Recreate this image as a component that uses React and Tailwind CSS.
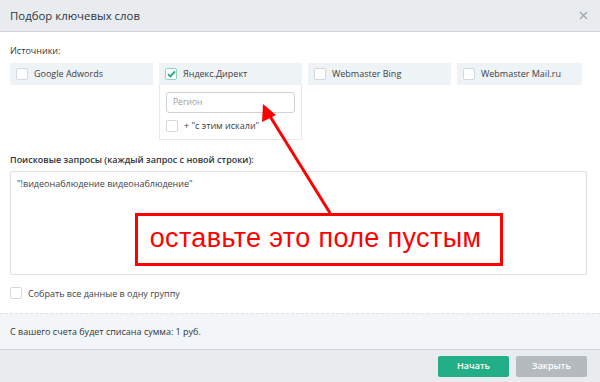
import React from "react";

function Box({ checked }) {
  return (
    <span
      className={
        "flex items-center justify-center w-[12px] h-[12px] rounded-[2px] bg-white border shrink-0 " +
        (checked ? "border-[#8fd3bd]" : "border-[#d3d8dc]")
      }
    >
      {checked && (
        <svg width="9" height="8" viewBox="0 0 9 8">
          <path d="M1 4.2 L3.4 6.5 L8 1.3" stroke="#1fa67f" strokeWidth="1.8" fill="none" />
        </svg>
      )}
    </span>
  );
}

function Source({ label, w, checked, children }) {
  return (
    <div className={"flex flex-col " + w}>
      <div className="flex items-center gap-[6px] h-[22px] px-[6px] bg-[#eef3f6] text-[9px] text-[#3c4147] whitespace-nowrap">
        <Box checked={checked} />
        <span>{label}</span>
      </div>
      {children}
    </div>
  );
}

export default function App() {
  return (
    <div
      className="relative w-[600px] h-[382px] bg-white overflow-hidden flex flex-col"
      style={{ fontFamily: '"Open Sans", "Noto Sans", sans-serif' }}
    >
      <div className="h-[32px] shrink-0 bg-[#e8ecef] border-b border-[#cfd5da] flex items-center justify-between pl-[10px] pr-[12px]">
        <span className="text-[11.4px] text-[#2f353b]">Подбор ключевых слов</span>
        <svg width="9" height="9" viewBox="0 0 9 9">
          <path d="M1 1 L8 8 M8 1 L1 8" stroke="#9aa1a7" strokeWidth="1.2" />
        </svg>
      </div>

      <div className="flex-1 flex flex-col px-[10px]">
        <div className="mt-[12px] text-[9px] leading-[14px] text-[#2f353b]">Источники:</div>
        <div className="mt-[5px] flex items-start gap-[6px]">
          <Source label="Google Adwords" w="w-[143px]" />
          <Source label="Яндекс.Директ" w="w-[143px]" checked>
            <div className="border border-t-0 border-[#e6eaed] px-[6px] pt-[7px] pb-[6px] flex flex-col gap-[6px]">
              <div className="h-[21px] border border-[#cdd3d8] rounded-[3px] flex items-center px-[6px] text-[8.5px] text-[#9aa0a6]">
                Регион
              </div>
              <div className="flex items-center gap-[6px] text-[9px] text-[#3c4147]">
                <Box />
                <span>+ "с этим искали"</span>
              </div>
            </div>
          </Source>
          <Source label="Webmaster Bing" w="w-[143px]" />
          <Source label="Webmaster Mail.ru" w="w-[125px]" />
        </div>

        <div className="mt-[13px] text-[9px] leading-[14px] font-semibold text-[#2f353b]">
          Поисковые запросы (каждый запрос с новой строки):
        </div>
        <div className="mt-[4px] w-[577px] h-[104px] border border-[#dde1e4] rounded-[2px] px-[6px] py-[5px] text-[9px] text-[#3c4147]">
          "!видеонаблюдение видеонаблюдение"
        </div>

        <div className="mt-[12px] flex items-center gap-[6px] text-[9px] text-[#3c4147]">
          <Box />
          <span>Собрать все данные в одну группу</span>
        </div>
      </div>

      <div className="h-[36px] shrink-0 bg-[#f3f6f8] border-t border-dashed border-[#dfe4e8] flex items-center px-[10px] text-[9px] text-[#2f353b]">
        С вашего счета будет списана сумма: 1 руб.
      </div>
      <div className="h-[33px] shrink-0 bg-[#e8ecef] border-t border-[#cfd5da] flex items-center justify-end gap-[7px] pr-[13px]">
        <button className="w-[71px] h-[21px] rounded-[2px] bg-[#22ae86] text-white text-[9px] font-semibold">Начать</button>
        <button className="w-[71px] h-[21px] rounded-[2px] bg-[#b5babf] text-white text-[9px] font-semibold">Закрыть</button>
      </div>

      <svg className="absolute left-0 top-0 pointer-events-none" width="600" height="382">
        <line x1="330" y1="213" x2="268" y2="113" stroke="#ff0000" strokeWidth="3" />
        <polygon points="263,104 276,115 262,122" fill="#ff0000" />
      </svg>
      <div
        className="absolute left-[135px] top-[213px] w-[368px] h-[53px] border-[3px] border-[#ff0000] bg-white flex items-center justify-center pr-[7px] pb-[3px] text-[#ff0000] text-[27px] tracking-[0.35px]"
        style={{ fontFamily: '"Liberation Sans", Arial, sans-serif' }}
      >
        оставьте это поле пустым
      </div>
    </div>
  );
}
